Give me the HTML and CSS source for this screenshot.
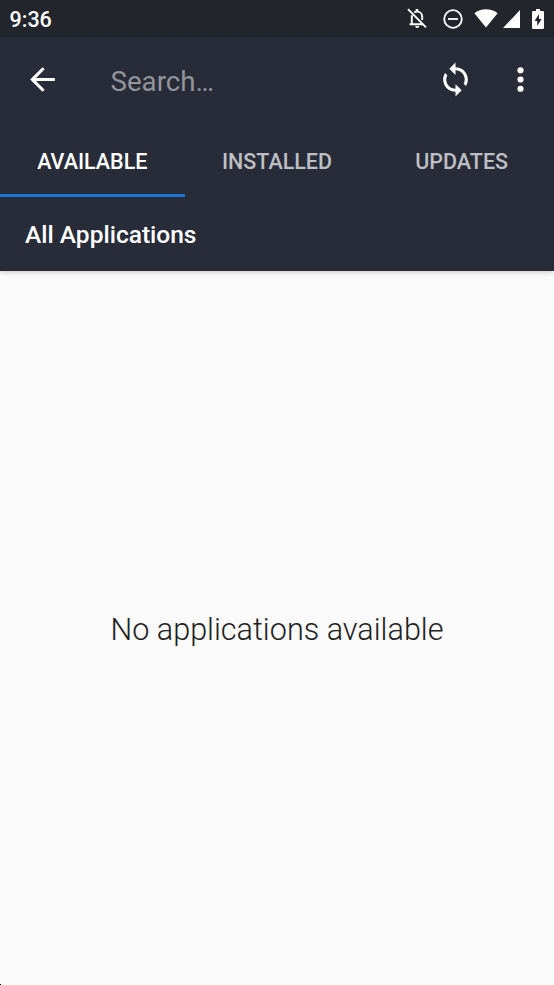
FILE: index.html
```html
<!DOCTYPE html>
<html lang="en">
<head>
<meta charset="utf-8">
<title>Applications</title>
<link rel="stylesheet" href="styles.css">
</head>
<body>
<div class="screen">
  <div class="status">
    <span class="clock">9:36</span>
    <svg class="bell" width="20" height="21" viewBox="0 0 20 21" fill="none" stroke="#fff" stroke-width="1.9"><path d="M1 1.2 19 19.4M4.8 7.2V16M2.6 16.2H15.6M7.2 4.4C8 3.8 9 3.6 10.2 3.6c3 0 5 2.200 5 5V12"/><path d="M8.700 1h2.600v3H8.700zM8.200 18h4c0 1.300-.8 2-2 2s-2-.7-2-2z" fill="#fff" stroke="none"/></svg>
    <svg class="dnd" width="20" height="20" viewBox="0 0 20 20" fill="none" stroke="#fff" stroke-width="1.8"><circle cx="10" cy="10" r="8.800"/><path d="M5 10h10"/></svg>
    <svg class="wifi" width="24" height="19" viewBox="0 0 24 19" fill="#fff"><path d="M12 18.500 .4 4.200C3.600 1.500 7.700.2 12 .2s8.400 1.300 11.600 4z"/></svg>
    <svg class="signal" width="17" height="18" viewBox="0 0 17 18" fill="#fff"><path d="M0 18 17 0v18z"/></svg>
    <svg class="battery" width="12" height="20" viewBox="0 0 12 20" fill="#fff" fill-rule="evenodd"><path d="M4 0h4v2h2.700Q12 2 12 3.300v15.400Q12 20 10.700 20H1.300Q0 20 0 18.700V3.300Q0 2 1.300 2H4zM7 5 2.600 12H5.200v5L9.600 10H7z"/></svg>
  </div>
  <header class="header">
    <div class="toolbar">
      <svg class="icon back" viewBox="0 0 24 24"><path d="M20 11H7.830l5.590-5.590L12 4l-8 8 8 8 1.410-1.410L7.830 13H20v-2z"/></svg>
      <span class="search">Search…</span>
      <svg class="icon sync" viewBox="0 0 24 24"><path d="M12 4V1L8 5l4 4V6c3.310 0 6 2.690 6 6 0 1.010-.25 1.970-.7 2.800l1.460 1.460C19.540 15.030 20 13.570 20 12c0-4.420-3.580-8-8-8zm0 14c-3.310 0-6-2.690-6-6 0-1.010.25-1.970.7-2.800L5.240 7.740C4.460 8.970 4 10.430 4 12c0 4.420 3.580 8 8 8v3l4-4-4-4v3z"/></svg>
      <svg class="icon more" viewBox="0 0 24 24"><circle cx="12" cy="6" r="2"/><circle cx="12" cy="12" r="2"/><circle cx="12" cy="18" r="2"/></svg>
    </div>
    <nav class="tabs">
      <span class="tab active">AVAILABLE</span>
      <span class="tab">INSTALLED</span>
      <span class="tab">UPDATES</span>
    </nav>
    <div class="category">All Applications</div>
  </header>
  <main class="content">No applications available</main>
  <i class="corner"></i>
</div>
</body>
</html>
```
FILE: styles.css
```css
body {
  margin: 0;
  font-family: Roboto, sans-serif;
  background: #fafafa;
}

.screen {
  display: flex;
  flex-direction: column;
  height: 985px;
  position: relative;
  overflow: hidden;
}

svg {
  display: block;
  flex: none;
}

.status {
  display: flex;
  align-items: center;
  box-sizing: border-box;
  height: 37px;
  padding: 0 10px 0 9.500px;
  background: #22252c;
  color: #fff;
}

.clock {
  margin-right: auto;
  padding-top: 2px;
  font-size: 21.500px;
  font-weight: 500;
}

.dnd { margin-left: 16px; }
.wifi { margin-left: 11px; }
.signal { margin-left: 5px; }
.battery { margin-left: 12px; }

.header {
  background: #272c38;
  color: #fff;
  box-shadow: 0 1px 5px rgba(0, 0, 0, 0.22);
}

.toolbar {
  display: flex;
  align-items: center;
  box-sizing: border-box;
  height: 86px;
  padding: 0 15.500px 1px 24px;
}

.icon {
  width: 37px;
  height: 37px;
  fill: #fff;
}

.search {
  flex: 1;
  margin-left: 49.500px;
  padding-top: 4px;
  font-size: 27.700px;
  color: #93959b;
}

.more { margin-left: 27.500px; }

.tabs {
  display: grid;
  grid-template-columns: repeat(3, 1fr);
  height: 74px;
}

.tab {
  box-sizing: border-box;
  height: 74px;
  border-bottom: 3px solid transparent;
  text-align: center;
  line-height: 77px;
  font-size: 21.500px;
  font-weight: 500;
  color: #bebfc3;
}

.active {
  color: #fff;
  border-color: #1976d2;
}

.category {
  height: 74px;
  padding-left: 25px;
  line-height: 76px;
  font-size: 24.500px;
  font-weight: 500;
}

.content {
  flex: 1;
  display: flex;
  align-items: center;
  justify-content: center;
  padding-top: 3px;
  font-size: 30.600px;
  font-weight: 300;
  color: #212121;
}

.corner {
  position: absolute;
  left: 0;
  bottom: 0;
  width: 1px;
  height: 1px;
  background: #000;
}
```
